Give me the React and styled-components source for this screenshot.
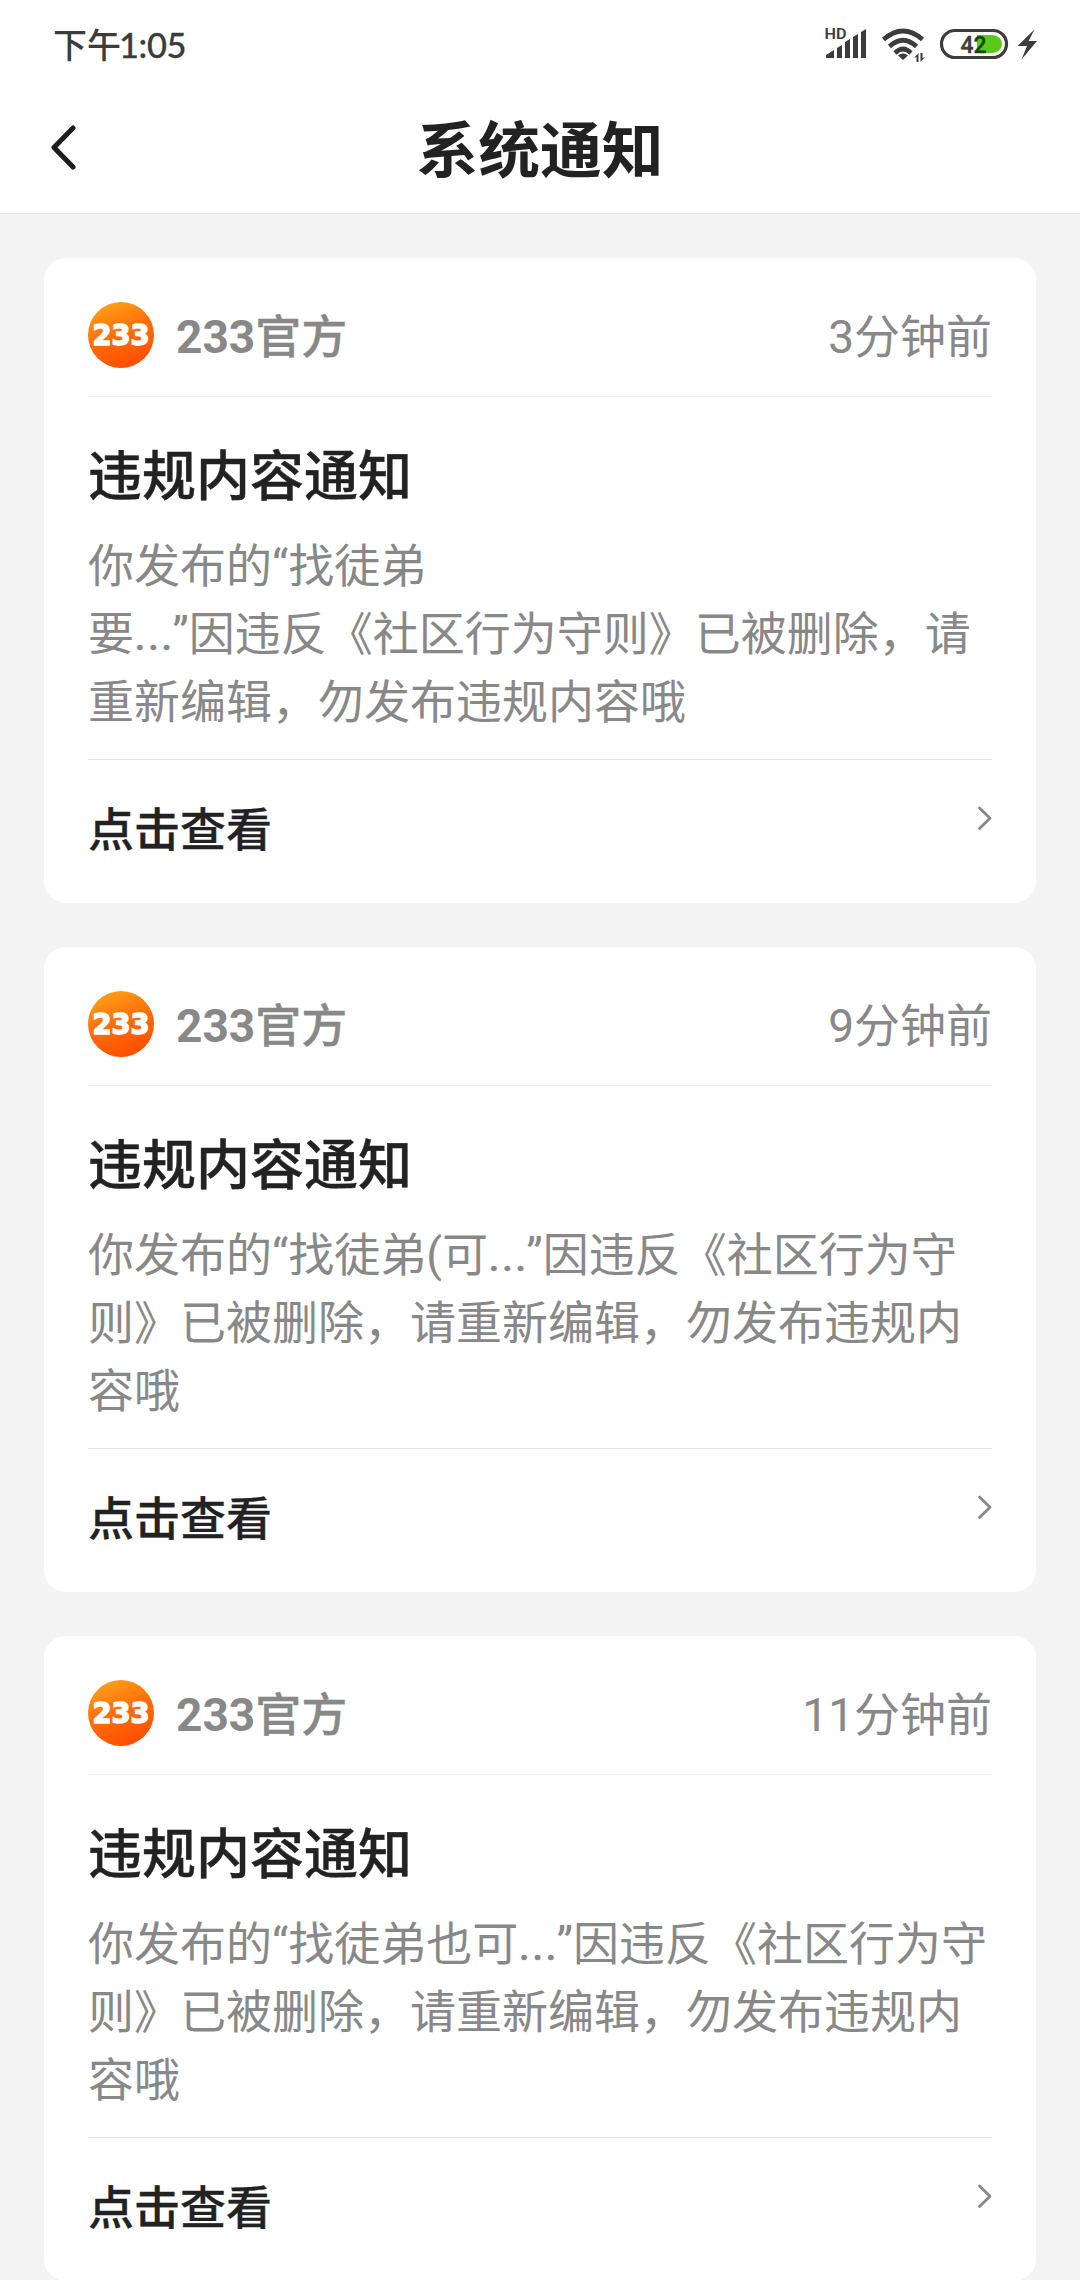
import React from "react";
import styled, { createGlobalStyle, css } from "styled-components";

const Global = createGlobalStyle`
  * { box-sizing: border-box; }
  html, body { margin: 0; height: 100%; overflow: hidden; background: #f4f4f4; }
  body { font-family: Roboto, "Noto Sans CJK SC", sans-serif; color: #222; }
`;

const Page = styled.div`
  width: 1080px;
  height: 2280px;
  overflow: hidden;
  display: flex;
  flex-direction: column;
`;

const TopArea = styled.div`
  flex: none;
  height: 214px;
  background: #fff;
  border-bottom: 1px solid #e4e4e4;
`;

const StatusBar = styled.div`
  height: 88px;
  padding: 0 40px 0 53px;
  display: flex;
  justify-content: space-between;
`;

const Clock = styled.div`
  display: flex;
  align-items: baseline;
  font: 500 34px/44px "Noto Sans CJK SC", sans-serif;
  color: #3c3c3c;
  padding-top: 22px;
`;

const Digits = styled.span`
  font-family: Lato, sans-serif;
  font-weight: 500;
  font-size: 34.5px;
  letter-spacing: -0.4px;
  margin-left: -2px;
  -webkit-text-stroke: 0.3px #3c3c3c;
`;

const StatusIcons = styled.svg`
  width: 220px;
  height: 88px;
  font-family: Roboto, sans-serif;
`;

const NavBar = styled.header`
  height: 125px;
  padding: 0 50px;
  display: grid;
  grid-template-columns: 100px 1fr 100px;
  align-items: center;
`;

const BackIcon = styled.svg`
  width: 28px;
  height: 46px;
  margin-top: -8px;
`;

const PageTitle = styled.h1`
  margin: 0;
  text-align: center;
  font: 700 61.8px/90px "Noto Sans CJK SC", sans-serif;
  padding-bottom: 10px;
`;

const List = styled.main`
  padding: 44px;
  display: flex;
  flex-direction: column;
  gap: 44px;
`;

const Card = styled.article`
  flex: none;
  height: 645px;
  padding: 0 44px;
  border-radius: 22px;
  background: #fff;
`;

const CardHead = styled.div`
  height: 139px;
  padding: 44px 0 28px;
  display: flex;
  align-items: center;
  border-bottom: 1px solid #efefef;
`;

const Logo = styled.svg`
  width: 66px;
  height: 66px;
  margin-right: 22px;
`;

const label = css`
  font-size: 46px;
  line-height: 66px;
  color: #888;
  white-space: nowrap;
`;

const Sender = styled.div`
  ${label}
  flex: 1;
  font-weight: 700;
`;

const SenderRole = styled.span`
  font-family: "Noto Sans CJK SC", sans-serif;
  font-weight: 500;
  -webkit-text-stroke: 0.3px #888;
`;

const Time = styled.time`
  ${label}
  padding-top: 3px;
`;

const Content = styled.div`
  height: 363px;
  border-bottom: 1px solid #e8e8e8;
`;

const Heading = styled.h2`
  margin: 0;
  height: 147px;
  padding-top: 36px;
  font: 500 54px/80px "Noto Sans CJK SC", sans-serif;
  -webkit-text-stroke: 0.4px #222;
`;

const Message = styled.p`
  margin: -12px 0 0;
  font-size: 46px;
  line-height: 68px;
  color: #888;
  white-space: nowrap;
`;

const Line = styled.span`
  display: block;
  height: 68px;
`;

const Dots = styled.span`
  letter-spacing: 1.3px;
  margin-right: -2px;
  -webkit-text-stroke: 0.6px #888;
`;

const Action = styled.div`
  display: flex;
  justify-content: space-between;
  font: 500 46px/68px "Noto Sans CJK SC", sans-serif;
  padding-top: 32px;
  -webkit-text-stroke: 0.3px #222;
`;

const Chevron = styled.svg`
  width: 15px;
  height: 26px;
  margin-top: 13px;
`;

const notices = [
  { time: "3分钟前", lines: ["你发布的“找徒弟", "要...”因违反《社区行为守则》已被删除，请", "重新编辑，勿发布违规内容哦"] },
  { time: "9分钟前", lines: ["你发布的“找徒弟(可...”因违反《社区行为守", "则》已被删除，请重新编辑，勿发布违规内", "容哦"] },
  { time: "11分钟前", lines: ["你发布的“找徒弟也可...”因违反《社区行为守", "则》已被删除，请重新编辑，勿发布违规内", "容哦"] },
];

function StatusGlyphs() {
  return (
    <StatusIcons viewBox="820 0 220 88" fill="#3c3c3c">
      <text x="824.500" y="38.500" fontSize="15.500" fontWeight="600" textLength="22" lengthAdjust="spacingAndGlyphs">HD</text>
      <path d="M826 58v-3l8-5v8zM837 58v-10l5-3v13zM845 58v-16l5-3v19zM853 58v-21l5-3v24zM861 58v-26l5-3v29z" />
      <g fill="none" stroke="#3c3c3c" strokeWidth="4.6">
        <path d="M883.500 39.500Q903 22.500 922.500 39.500" />
        <path d="M889.500 46.500Q903 34 916.500 46.500" />
        <path d="M895 53Q903 45 911 53" />
      </g>
      <path d="M898 55.500q5-4 10 0l-5 4.500z" />
      <path d="M918.500 53v9h-2v-5l-2.500 1zM920.500 62v-9h2v5l2.500-1z" />
      <rect x="941.500" y="30.500" width="65" height="27" rx="13.500" fill="#fff" stroke="#3c3c3c" strokeWidth="3.200" />
      <path d="M977 35h16a9 9 0 0 1 0 18h-16z" fill="#5bc81e" />
      <text x="960.500" y="52.500" fontSize="24" fontWeight="500" stroke="#3c3c3c" strokeWidth="0.4" textLength="26" lengthAdjust="spacingAndGlyphs">
        4<tspan fill="#0d4a12" stroke="#0d4a12">2</tspan>
      </text>
      <path d="M1034.500 29.500L1017.500 46h9.500l-5.500 13.500L1037 41h-8.500z" />
    </StatusIcons>
  );
}

function BrandLogo({ id }) {
  return (
    <Logo viewBox="0 0 66 66">
      <defs>
        <linearGradient id={id} x1="0.2" y1="0" x2="0.6" y2="1">
          <stop offset="0" stopColor="#ffa41a" />
          <stop offset="0.5" stopColor="#ff6e08" />
          <stop offset="1" stopColor="#ff4e00" />
        </linearGradient>
      </defs>
      <circle cx="33" cy="33" r="33" fill={`url(#${id})`} />
      <text x="4.500" y="43.300" fill="#fff" stroke="#fff" strokeWidth="1.5" fontFamily="'DejaVu Sans', sans-serif" fontWeight="700" fontSize="28" textLength="57" lengthAdjust="spacingAndGlyphs">233</text>
    </Logo>
  );
}

function MessageLine({ text }) {
  const [before, after] = text.split("...");
  return (
    <Line>
      {before}
      {after && <Dots>...</Dots>}
      {after}
    </Line>
  );
}

function Notice({ time, lines, index }) {
  return (
    <Card>
      <CardHead>
        <BrandLogo id={`brand${index}`} />
        <Sender>233<SenderRole>官方</SenderRole></Sender>
        <Time>{time}</Time>
      </CardHead>
      <Content>
        <Heading>违规内容通知</Heading>
        <Message>
          {lines.map((l) => <MessageLine key={l} text={l} />)}
        </Message>
      </Content>
      <Action>
        <span>点击查看</span>
        <Chevron viewBox="0 0 15 26" fill="none" stroke="#888" strokeWidth="2.8" strokeLinecap="round" strokeLinejoin="round">
          <path d="M2.500 3L13 13.300 2.500 23.500" />
        </Chevron>
      </Action>
    </Card>
  );
}

export default function App() {
  return (
    <Page>
      <Global />
      <TopArea>
        <StatusBar>
          <Clock>下午<Digits>1:05</Digits></Clock>
          <StatusGlyphs />
        </StatusBar>
        <NavBar>
          <BackIcon viewBox="0 0 28 46" fill="none" stroke="#1c1c1c" strokeWidth="5" strokeLinecap="round" strokeLinejoin="round">
            <path d="M23 4L4 23.500 23 43" />
          </BackIcon>
          <PageTitle>系统通知</PageTitle>
        </NavBar>
      </TopArea>
      <List>
        {notices.map((n, i) => <Notice key={n.time} index={i} {...n} />)}
      </List>
    </Page>
  );
}
